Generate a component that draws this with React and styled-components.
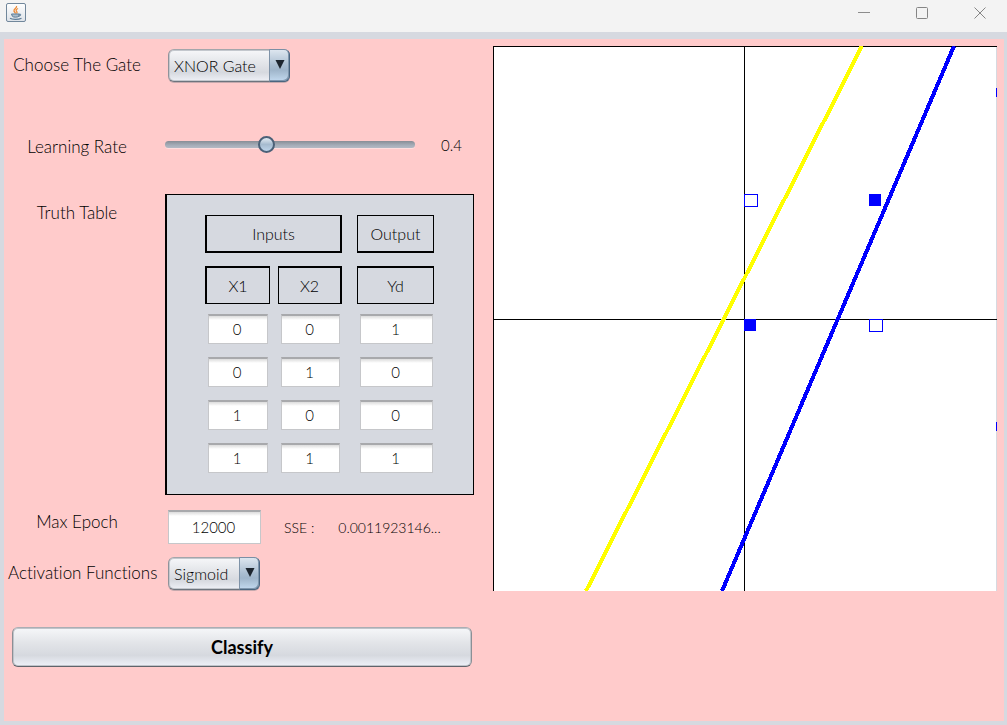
import React, { useState } from "react";
import styled, { createGlobalStyle } from "styled-components";

const GlobalStyle = createGlobalStyle`
  * { box-sizing: border-box; }
  body { margin: 0; background: #d6d9e0; }
  body, button, input, select {
    font-family: "Century Gothic", Lato, sans-serif;
    font-size: 16px;
    font-weight: 300;
    font-variant-ligatures: none;
    color: #000;
  }
`;

const Frame = styled.div`
  display: flex;
  flex-direction: column;
  min-height: 100vh;
  background: #d6d9e0;
`;

const TitleBar = styled.header`
  display: flex;
  align-items: flex-start;
  justify-content: space-between;
  height: 32px;
  padding: 3px 4px 0 6px;
  background: #f3f3f3;
`;

const WindowButtons = styled.div`
  display: flex;
  gap: 12px;
`;

const WindowButton = styled.button`
  display: flex;
  align-items: center;
  justify-content: center;
  width: 46px;
  height: 20px;
  padding: 0;
  border: 0;
  background: transparent;
`;

const Content = styled.main`
  flex: 1;
  display: flex;
  align-items: flex-start;
  gap: 19px;
  margin: 7px 3px 4px 4px;
  padding: 7px 7px 20px 4px;
  background: #ffcbcb;
`;

const Form = styled.form`
  flex: none;
  width: 466px;
  display: flex;
  flex-direction: column;
  padding-top: 2px;
`;

const FormRow = styled.div`
  display: grid;
  grid-template-columns: 138px 309px;
  column-gap: 19px;
  align-items: center;
  min-height: ${(p) => p.$height || 34}px;
  margin-bottom: ${(p) => p.$after}px;
`;

const Label = styled.label`
  align-self: ${(p) => p.$self || "center"};
  padding-top: ${(p) => (p.$drop ? 7 : 0)}px;
  font-size: 17px;
  line-height: 24px;
  text-align: center;
  white-space: nowrap;
`;

const Controls = styled.div`
  display: flex;
  align-items: center;
  padding-left: ${(p) => (p.$flush ? 0 : 3)}px;
`;

const SelectBox = styled.div`
  position: relative;
  width: ${(p) => p.$width}px;
  height: 33px;
`;

const Select = styled.select`
  appearance: none;
  width: 100%;
  height: 100%;
  padding: 0 22px 0 5px;
  border: 1px solid;
  border-color: #a3a6ab #8f9cab #6d747d #8f939a;
  border-radius: 6px;
  background: linear-gradient(#f6f7f9, #e4e6ea 40%, #d6d9df 72%, #eef0f6);
  box-shadow: inset 0 0 0 1px #c3c7cd, 0 1px 0 #c5a9ad;
  text-overflow: clip;
`;

const SelectCap = styled.span`
  position: absolute;
  top: 0;
  right: 0;
  width: 21px;
  height: 100%;
  border: 1px solid;
  border-color: #7b8fa5 #4a657f #4a657f #7f93a8;
  border-radius: 0 6px 6px 0;
  background: linear-gradient(#dde6ef, #a9bdd0 50%, #9fb5ca 65%, #c2d9ef);
  box-shadow: inset -1px -1px 0 #7f96ad;
  pointer-events: none;
  display: flex;
  justify-content: center;
  padding-top: 10px;
`;

const Slider = styled.input`
  appearance: none;
  width: 250px;
  height: 24px;
  margin: 0;
  background: transparent;
  &::-webkit-slider-runnable-track {
    height: 7px;
    border-radius: 4px;
    background: linear-gradient(#878d96, #a5adb8 60%, #b3b9c4);
    box-shadow: 0 1px 0 #ffdede;
  }
  &::-webkit-slider-thumb {
    appearance: none;
    width: 17px;
    height: 17px;
    margin-top: -5px;
    border: 2px solid #4b6077;
    border-radius: 50%;
    background: linear-gradient(#e2eaf2, #a6bbcf 50%, #bdd4ea);
  }
`;

const Rate = styled.output`
  margin-left: 26px;
  font-size: 15px;
`;

const TablePanel = styled.div`
  height: 301px;
  padding: 20px 38px;
  border: 1px solid #000;
  border-left-width: 2px;
  background: #d6d9e0;
`;

const Table = styled.table`
  border-collapse: collapse;
  th, td { padding: 0; font-weight: 300; vertical-align: top; }
`;

const HeadCell = styled.th`
  height: ${(p) => p.$height}px;
`;

const HeadBox = styled.div`
  width: ${(p) => p.$width}px;
  height: 38px;
  margin-right: ${(p) => p.$gap || 0}px;
  border: solid #000;
  border-width: ${(p) => p.$edges || "1px"};
  line-height: 36px;
  text-align: center;
`;

const BodyCell = styled.td`
  height: 43px;
`;

const TextField = styled.input`
  display: block;
  width: ${(p) => p.$width}px;
  height: ${(p) => p.$height || 30}px;
  margin: 0 0 0 ${(p) => (p.$inset ? 3 : 0)}px;
  padding: 0 2px 2px 0;
  border: 1px solid #c6c7ca;
  border-top: 2px solid #a8a9ac;
  background: linear-gradient(#dcdcdc, #fff 4px);
  font-size: 15px;
  text-align: center;
`;

const ErrorText = styled.span`
  margin-left: ${(p) => p.$gap}px;
  font-size: 14px;
`;

const ClassifyButton = styled.button`
  width: 460px;
  height: 40px;
  margin-left: 4px;
  border: 1px solid;
  border-color: #aaaeb4 #8b8f95 #5f646b #8b8f95;
  border-radius: 6px;
  background: linear-gradient(#f6f7f9, #e2e4e8 40%, #d6d9df 72%, #eef1f8);
  box-shadow: inset 0 0 0 1px #c0c4ca;
  font-size: 18px;
  font-weight: 700;
`;

const Plot = styled.svg`
  flex: 1;
  min-width: 0;
  display: block;
  background: #fff;
`;

const truthRows = [
  [0, 0, 1],
  [0, 1, 0],
  [1, 0, 0],
  [1, 1, 1],
];
const fieldWidths = [60, 59, 73];

function JavaIcon() {
  return (
    <svg width="20" height="20" viewBox="0 0 20 20" aria-hidden="true">
      <defs>
        <linearGradient id="tile" x1="0" y1="0" x2="0" y2="1">
          <stop offset="0" stopColor="#fff" />
          <stop offset="1" stopColor="#dde2e8" />
        </linearGradient>
      </defs>
      <rect x="0.5" y="0.5" width="19" height="18" rx="1.5" fill="url(#tile)" stroke="#71879b" />
      <path d="M10.5 3C11.5 5 7.500 6 8 8C8.200 9 9.500 9.500 9.500 10.500M12 5.500C10 6.500 9.500 7.500 10.800 8.600C11.500 9.400 10.800 10 10.500 10.500" fill="none" stroke="#ee8a35" strokeWidth="1.300" />
      <path d="M5.500 11H13V13C12.500 14.500 7 14.500 6.300 13.200ZM13 11.200C15.500 10.500 15.300 13 12.700 13.300" fill="#a9bccb" stroke="#5d7d98" />
      <path d="M4 15.300C6 16.700 12.500 16.700 15.500 15.200" fill="none" stroke="#5d7d98" strokeWidth="1.200" />
    </svg>
  );
}

function Combo({ id, width, options }) {
  return (
    <SelectBox $width={width}>
      <Select id={id}>
        {options.map((o) => <option key={o}>{o}</option>)}
      </Select>
      <SelectCap>
        <svg width="10" height="9" viewBox="0 0 10 9"><path d="M0.500 0H9.500L5 9Z" fill="#1d252e" /></svg>
      </SelectCap>
    </SelectBox>
  );
}

function DecisionPlot() {
  return (
    <Plot viewBox="0 0 504 545" shapeRendering="crispEdges" role="img" aria-label="Decision boundaries">
      <rect x="503" width="1" height="545" fill="#d6d9e0" />
      <path d="M0 0.500H504M0.500 0V545M251.500 0V545M0 273.500H504" stroke="#000" fill="none" />
      <g fill="none" stroke="#00f">
        <rect x="251.500" y="148.500" width="13" height="12" />
        <rect x="376.500" y="273.500" width="13" height="12" />
      </g>
      <g fill="#00f">
        <rect x="376" y="148" width="12" height="12" />
        <rect x="251" y="273" width="12" height="12" />
        <rect x="503" y="42" width="1" height="9" />
        <rect x="503" y="376" width="1" height="9" />
      </g>
      <path d="M369 0L93 545" stroke="#ff0" strokeWidth="4" />
      <path d="M461 0L229 545" stroke="#00f" strokeWidth="4" />
    </Plot>
  );
}

export default function App() {
  const [rate, setRate] = useState("0.4");
  return (
    <Frame>
      <GlobalStyle />
      <TitleBar>
        <JavaIcon />
        <WindowButtons>
          <WindowButton aria-label="Minimize">
            <svg width="12" height="12"><path d="M0 5.500H12" stroke="#8c8c8c" /></svg>
          </WindowButton>
          <WindowButton aria-label="Maximize">
            <svg width="12" height="12"><rect x="0.500" y="0.500" width="11" height="11" rx="1" fill="none" stroke="#858585" /></svg>
          </WindowButton>
          <WindowButton aria-label="Close">
            <svg width="12" height="12"><path d="M0.500 0.500L11.500 11.500M11.500 0.500L0.500 11.500" stroke="#858585" /></svg>
          </WindowButton>
        </WindowButtons>
      </TitleBar>
      <Content>
        <Form onSubmit={(e) => e.preventDefault()}>
          <FormRow $after={48}>
            <Label htmlFor="gate">Choose The Gate</Label>
            <Controls><Combo id="gate" width={122} options={["XNOR Gate", "XOR Gate", "AND Gate", "OR Gate"]} /></Controls>
          </FormRow>
          <FormRow $height={29} $after={35}>
            <Label htmlFor="rate" $self="end">Learning Rate</Label>
            <Controls $flush>
              <Slider id="rate" type="range" min="0" max="1" step="0.1" value={rate} onChange={(e) => setRate(e.target.value)} />
              <Rate htmlFor="rate">{rate}</Rate>
            </Controls>
          </FormRow>
          <FormRow $after={15}>
            <Label as="span" id="truth" $self="start" $drop>Truth Table</Label>
            <TablePanel>
              <Table aria-labelledby="truth">
                <thead>
                  <tr>
                    <HeadCell colSpan={2} $height={51}><HeadBox $width={137} $gap={15} $edges="1px 2px 2px 2px">Inputs</HeadBox></HeadCell>
                    <HeadCell $height={51}><HeadBox $width={77} $edges="1px 1px 2px 1px">Output</HeadBox></HeadCell>
                  </tr>
                  <tr>
                    <HeadCell $height={48}><HeadBox $width={65} $gap={8} $edges="2px 1px 1px 2px">X1</HeadBox></HeadCell>
                    <HeadCell $height={48}><HeadBox $width={64} $gap={15} $edges="2px 2px 1px 1px">X2</HeadBox></HeadCell>
                    <HeadCell $height={48}><HeadBox $width={77} $edges="2px 1px 1px 1px">Yd</HeadBox></HeadCell>
                  </tr>
                </thead>
                <tbody>
                  {truthRows.map((row, r) => (
                    <tr key={r}>
                      {row.map((v, c) => (
                        <BodyCell key={c}>
                          <TextField $inset $width={fieldWidths[c]} defaultValue={v} aria-label={`${["X1", "X2", "Yd"][c]} row ${r + 1}`} />
                        </BodyCell>
                      ))}
                    </tr>
                  ))}
                </tbody>
              </Table>
            </TablePanel>
          </FormRow>
          <FormRow $height={34} $after={12}>
            <Label htmlFor="epoch" $self="start">Max Epoch</Label>
            <Controls>
              <TextField id="epoch" $width={93} $height={34} defaultValue="12000" />
              <ErrorText $gap={23}>SSE :</ErrorText>
              <ErrorText $gap={24}>0.0011923146...</ErrorText>
            </Controls>
          </FormRow>
          <FormRow $after={37}>
            <Label htmlFor="activation">Activation Functions</Label>
            <Controls><Combo id="activation" width={92} options={["Sigmoid", "Step", "Sign"]} /></Controls>
          </FormRow>
          <ClassifyButton type="submit">Classify</ClassifyButton>
        </Form>
        <DecisionPlot />
      </Content>
    </Frame>
  );
}
